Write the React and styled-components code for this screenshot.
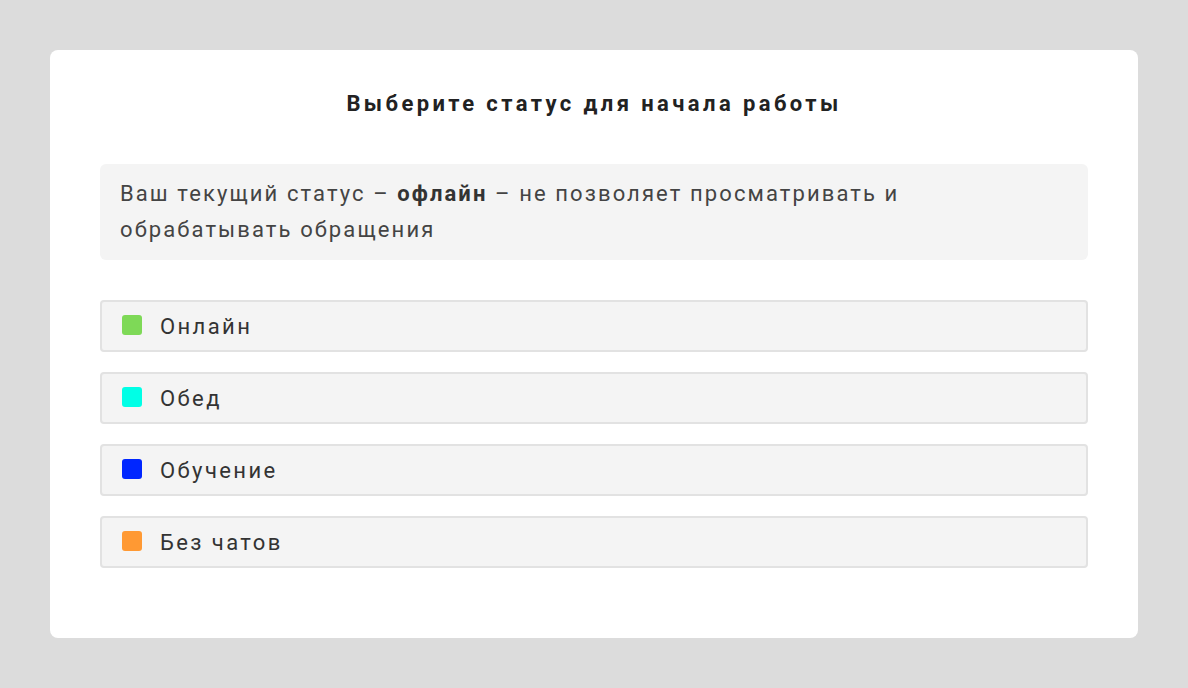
import React from 'react';
import styled, { createGlobalStyle } from 'styled-components';

const GlobalStyle = createGlobalStyle`
  html, body {
    margin: 0;
    padding: 0;
    background: #dcdcdc;
    font-family: Roboto, "Liberation Sans", sans-serif;
  }
`;

const Page = styled.div`
  padding: 50px;
  min-height: 688px;
  box-sizing: border-box;
`;

const Card = styled.div`
  background: #ffffff;
  border-radius: 8px;
  padding: 36px 50px 70px;
  display: flex;
  flex-direction: column;
`;

const Title = styled.h1`
  margin: 0 0 42px;
  font-size: 22px;
  line-height: 36px;
  font-weight: 700;
  letter-spacing: 3.4px;
  color: #222;
  text-align: center;
`;

const Notice = styled.div`
  background: #f4f4f4;
  border-radius: 6px;
  padding: 12px 20px;
  font-size: 22px;
  line-height: 36px;
  letter-spacing: 2.1px;
  color: #444;
  margin-bottom: 40px;

  b {
    color: #333;
    font-weight: 700;
  }
`;

const List = styled.div`
  display: flex;
  flex-direction: column;
  gap: 20px;
`;

const StatusRow = styled.button`
  display: flex;
  align-items: center;
  gap: 18px;
  height: 52px;
  box-sizing: border-box;
  padding: 0 20px;
  background: #f4f4f4;
  border: 2px solid #e2e2e2;
  border-radius: 4px;
  font-family: inherit;
  font-size: 22px;
  letter-spacing: 2.4px;
  color: #333;
  text-align: left;
  cursor: pointer;
`;

const Dot = styled.span`
  width: 20px;
  height: 20px;
  border-radius: 3px;
  flex: none;
  background: ${(p) => p.color};
  margin-top: -2px;
`;

const statuses = [
  { name: 'Онлайн', color: '#7ed957' },
  { name: 'Обед', color: '#00ffe6' },
  { name: 'Обучение', color: '#0026ff' },
  { name: 'Без чатов', color: '#ff9933' },
];

export default function App() {
  return (
    <>
      <GlobalStyle />
      <Page>
        <Card>
          <Title>Выберите статус для начала работы</Title>
          <Notice>
            Ваш текущий статус – <b>офлайн</b> – не позволяет просматривать и
            <br />
            обрабатывать обращения
          </Notice>
          <List>
            {statuses.map((s) => (
              <StatusRow key={s.name}>
                <Dot color={s.color} />
                {s.name}
              </StatusRow>
            ))}
          </List>
        </Card>
      </Page>
    </>
  );
}
